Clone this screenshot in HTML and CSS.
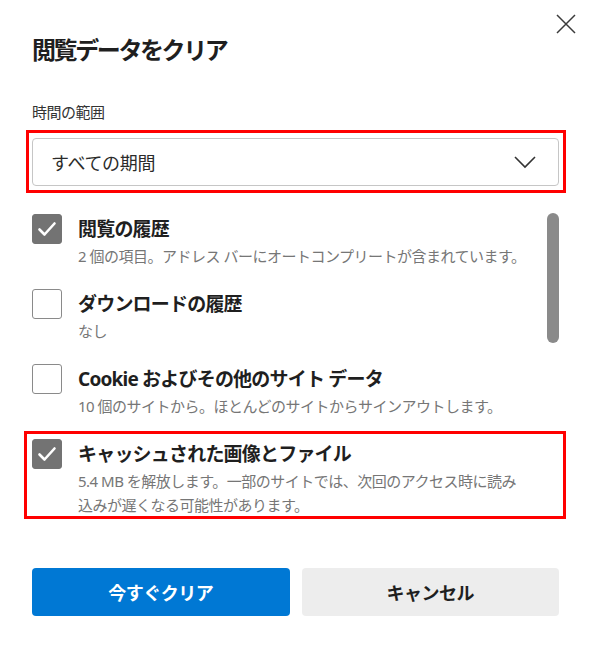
FILE: index.html
```html
<!DOCTYPE html>
<html lang="ja">
<head>
<meta charset="utf-8">
<title>閲覧データをクリア</title>
<link rel="stylesheet" href="styles.css">
</head>
<body>
<div class="dialog">
  <div class="header">
    <h1 class="title">閲覧データをクリア</h1>
    <button class="close" aria-label="閉じる">
      <svg width="20" height="20" viewBox="0 0 20 20"><path d="M1 1 L19 19 M19 1 L1 19" stroke="#3b3b3b" stroke-width="1.5" fill="none"/></svg>
    </button>
  </div>

  <div class="section">
    <div class="field-label">時間の範囲</div>
    <div class="select highlight-select">
      <span class="select-text">すべての期間</span>
      <svg class="chevron" width="22" height="13" viewBox="0 0 22 13"><path d="M1 1 L11 11 L21 1" stroke="#333" stroke-width="1.6" fill="none"/></svg>
    </div>

    <div class="list">
      <div class="items">
        <div class="item">
          <span class="box checked"><svg width="30" height="30" viewBox="0 0 30 30"><path d="M7.5 15.5 L12.5 20.5 L22.5 9.5" stroke="#fff" stroke-width="2.6" fill="none" stroke-linecap="round" stroke-linejoin="round"/></svg></span>
          <div class="text">
            <div class="label">閲覧の履歴</div>
            <div class="sub">2 個の項目。アドレス バーにオートコンプリートが含まれています。</div>
          </div>
        </div>
        <div class="item">
          <span class="box"></span>
          <div class="text">
            <div class="label">ダウンロードの履歴</div>
            <div class="sub">なし</div>
          </div>
        </div>
        <div class="item">
          <span class="box"></span>
          <div class="text">
            <div class="label">Cookie およびその他のサイト データ</div>
            <div class="sub">10 個のサイトから。ほとんどのサイトからサインアウトします。</div>
          </div>
        </div>
        <div class="item highlight-item">
          <span class="box checked"><svg width="30" height="30" viewBox="0 0 30 30"><path d="M7.5 15.5 L12.5 20.5 L22.5 9.5" stroke="#fff" stroke-width="2.6" fill="none" stroke-linecap="round" stroke-linejoin="round"/></svg></span>
          <div class="text">
            <div class="label">キャッシュされた画像とファイル</div>
            <div class="sub">5.4 MB を解放します。一部のサイトでは、次回のアクセス時に読み<br>込みが遅くなる可能性があります。</div>
          </div>
        </div>
      </div>
      <div class="scrolltrack"><div class="thumb"></div></div>
    </div>

    <div class="buttons">
      <button class="btn primary">今すぐクリア</button>
      <button class="btn secondary">キャンセル</button>
    </div>
  </div>
</div>
</body>
</html>
```

FILE: styles.css
```css
* { box-sizing: border-box; }
html, body {
  margin: 0;
  padding: 0;
  background: #ffffff;
}
body {
  font-family: "Noto Sans", "Noto Sans CJK JP", sans-serif;
  color: #1f1f1f;
}
.dialog {
  width: 591px;
  height: 646px;
  padding: 14px 15px 0 32px;
}
.header {
  display: flex;
  justify-content: space-between;
  align-items: flex-start;
}
.title {
  margin: 19px 0 0 0;
  font-size: 24px;
  line-height: 32px;
  font-weight: 700;
  letter-spacing: -2.4px;
  color: #1f1f1f;
  font-family: "Noto Sans CJK JP", sans-serif;
}
.close {
  width: 20px;
  height: 20px;
  padding: 0;
  margin: 0;
  border: none;
  background: none;
  display: flex;
}
.section {
  margin-right: 17px;
}
.field-label {
  margin-top: 36px;
  font-size: 15px;
  line-height: 22px;
  color: #333;
  letter-spacing: -0.5px;
}
.select {
  margin-top: 15px;
  height: 48px;
  border: 1px solid #c6c6c6;
  border-radius: 4px;
  display: flex;
  align-items: center;
  justify-content: space-between;
  padding: 0 22px 0 18px;
  position: relative;
}
.select-text {
  font-size: 18px;
  color: #2b2b2b;
  letter-spacing: -0.3px;
}
.highlight-select::after {
  content: "";
  position: absolute;
  left: -7px;
  right: -8px;
  top: -9px;
  bottom: -8px;
  border: 3px solid #ff0000;
}
.list {
  margin-top: 27px;
  display: flex;
}
.items {
  flex: 1;
  padding-top: 1px;
  display: flex;
  flex-direction: column;
  gap: 21px;
}
.item {
  display: flex;
  gap: 16px;
  position: relative;
}
.highlight-item::after {
  content: "";
  position: absolute;
  left: -8px;
  right: -19px;
  top: -8px;
  bottom: -2px;
  border: 3px solid #ff0000;
}
.box {
  flex: none;
  width: 30px;
  height: 30px;
  border: 1px solid #8a8a8a;
  border-radius: 3px;
  display: flex;
}
.box.checked {
  background: #737373;
  border-color: #737373;
}
.box.checked svg {
  margin: -1px;
}
.text {
  min-width: 0;
}
.label {
  font-size: 19px;
  line-height: 30px;
  font-weight: 700;
  color: #1f1f1f;
  letter-spacing: -0.8px;
}
.sub {
  font-size: 15px;
  line-height: 24px;
  color: #767676;
  letter-spacing: -0.5px;
  white-space: nowrap;
}
.scrolltrack {
  flex: none;
  width: 12px;
}
.thumb {
  width: 12px;
  height: 130px;
  border-radius: 6px;
  background: #8a8a8a;
}
.buttons {
  margin-top: 51px;
  display: flex;
  gap: 12px;
}
.btn {
  flex: 1;
  height: 48px;
  border: none;
  border-radius: 4px;
  font-family: "Noto Sans CJK JP", sans-serif;
  font-size: 18px;
  font-weight: 700;
  letter-spacing: -0.5px;
}
.primary {
  background: #0078d4;
  color: #ffffff;
}
.secondary {
  background: #ededed;
  color: #1f1f1f;
}
```
